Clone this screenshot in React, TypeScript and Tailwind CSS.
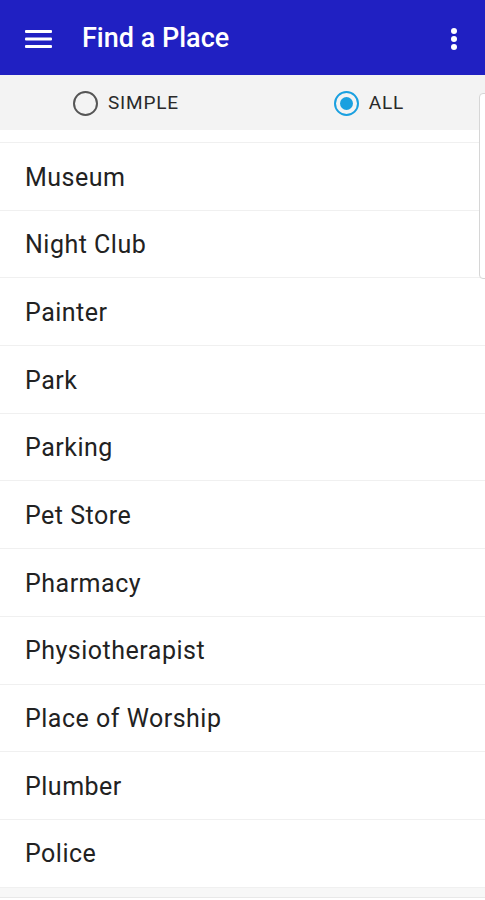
import React from 'react';

const places = [
  'Museum',
  'Night Club',
  'Painter',
  'Park',
  'Parking',
  'Pet Store',
  'Pharmacy',
  'Physiotherapist',
  'Place of Worship',
  'Plumber',
  'Police',
];

const Radio: React.FC<{ checked?: boolean; label: string }> = ({ checked, label }) => (
  <div className="flex items-center gap-[10px]">
    <span
      className={`flex h-[25px] w-[25px] items-center justify-center rounded-full border-[2.5px] ${
        checked ? 'border-[#1aa0e0]' : 'border-[#555]'
      }`}
    >
      {checked && <span className="h-[13px] w-[13px] rounded-full bg-[#1aa0e0]" />}
    </span>
    <span className="text-[19px] tracking-[0.8px] text-[#2a2a2a]">{label}</span>
  </div>
);

export default function App() {
  return (
    <div className="relative h-[900px] w-[485px] overflow-hidden bg-white font-['Roboto',sans-serif]">
      {/* toolbar */}
      <div className="flex h-[75px] items-center bg-[#2020c2] px-[25px] pt-[2px] text-white">
        <svg width="27" height="20" viewBox="0 0 27 20" className="shrink-0">
          <rect x="0" y="1" width="27" height="3" rx="1" fill="white" />
          <rect x="0" y="8.5" width="27" height="3" rx="1" fill="white" />
          <rect x="0" y="16" width="27" height="3" rx="1" fill="white" />
        </svg>
        <h1 className="ml-[30px] text-[27px] font-medium">Find a Place</h1>
        <svg width="8" height="24" viewBox="0 0 8 24" className="ml-auto mr-[2px]">
          <circle cx="4" cy="4" r="3" fill="white" />
          <circle cx="4" cy="12" r="3" fill="white" />
          <circle cx="4" cy="20" r="3" fill="white" />
        </svg>
      </div>

      {/* mode selector */}
      <div className="flex h-[55px] items-center bg-[#f3f3f3] pl-[73px] pt-[2px]">
        <Radio label="SIMPLE" />
        <div className="ml-[155px]">
          <Radio checked label="ALL" />
        </div>
      </div>

      {/* list */}
      <div className="mt-[12px] border-t border-[#f0f0f0]">
        {places.map((p) => (
          <div
            key={p}
            className="flex h-[67.7px] items-center border-b border-[#f0f0f0] pl-[25px] pt-[2px] text-[25px] tracking-[0.5px] text-[#222]"
          >
            {p}
          </div>
        ))}
        <div className="h-[10px] border-b border-[#e8e8e8] bg-[#f7f7f7]" />
      </div>

      {/* scroll thumb */}
      <div className="absolute right-[-6px] top-[93px] h-[186px] w-[12px] rounded-[4px] border border-[#d6d6d6] bg-white" />
    </div>
  );
}
